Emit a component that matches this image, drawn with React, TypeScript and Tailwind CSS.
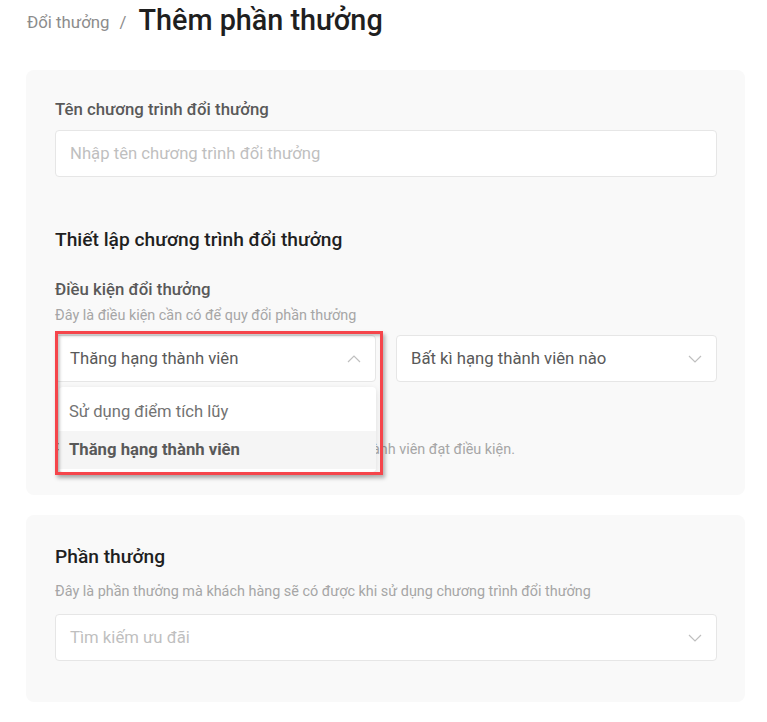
import React from "react";

function ChevronDown() {
  return (
    <svg width="14" height="8" viewBox="0 0 14 8" fill="none">
      <path d="M1 1l6 6 6-6" stroke="#bfbfbf" strokeWidth="1.2" />
    </svg>
  );
}

function ChevronUp() {
  return (
    <svg width="14" height="8" viewBox="0 0 14 8" fill="none">
      <path d="M1 7l6-6 6 6" stroke="#bfbfbf" strokeWidth="1.2" />
    </svg>
  );
}

export default function App() {
  return (
    <div className="min-h-[722px] bg-white font-['Roboto',sans-serif] pl-[26px] pr-[22px] pt-[3px] pb-[20px]">
      {/* Breadcrumb */}
      <div className="flex items-center h-[34px]">
        <span className="text-[16.8px] text-[#8c8c8c] pt-[6px] pl-[1px]">Đổi thưởng</span>
        <span className="text-[16.8px] text-[#8c8c8c] ml-[10px] mr-[12px] pt-[6px]">/</span>
        <h1 className="text-[28.8px] leading-[34px] text-[#1f1f1f] font-medium">Thêm phần thưởng</h1>
      </div>

      {/* Card 1 */}
      <div className="mt-[33px] bg-[#f9f9f9] rounded-[8px] pl-[29px] pr-[28px] pt-[28px] pb-[35px]">
        <div className="text-[16.8px] leading-[22px] text-[#595959] font-medium">Tên chương trình đổi thưởng</div>
        <div className="mt-[10px] h-[47px] bg-white border border-[#e6e6e6] rounded-[4px] flex items-center px-[14px]">
          <span className="text-[16.7px] text-[#bfbfbf]">Nhập tên chương trình đổi thưởng</span>
        </div>

        <div className="mt-[50px] text-[19.2px] leading-[26px] text-[#1f1f1f] font-medium">Thiết lập chương trình đổi thưởng</div>

        <div className="mt-[25px] text-[16.8px] leading-[22px] text-[#595959] font-medium">Điều kiện đổi thưởng</div>
        <div className="mt-[6px] text-[14.4px] leading-[20px] text-[#a6a6a6]">Đây là điều kiện cần có để quy đổi phần thưởng</div>

        <div className="relative mt-[9px] grid grid-cols-2 gap-[20px]">
          <div className="h-[47px] bg-white border border-[#e6e6e6] rounded-[4px] flex items-center justify-between pl-[14px] pr-[14px]">
            <span className="text-[16.7px] text-[#595959]">Thăng hạng thành viên</span>
            <ChevronUp />
          </div>
          <div className="h-[47px] bg-white border border-[#e6e6e6] rounded-[4px] flex items-center justify-between pl-[14px] pr-[14px]">
            <span className="text-[16.7px] text-[#595959]">Bất kì hạng thành viên nào</span>
            <ChevronDown />
          </div>

          {/* Dropdown menu */}
          <div className="absolute left-[4px] top-[52px] w-[317px] bg-white rounded-[4px] shadow-[0_2px_6px_rgba(0,0,0,0.12)] pt-[6px] pb-[3px] z-10">
            <div className="h-[38px] flex items-center px-[10px] text-[16.6px] text-[#737373]">Sử dụng điểm tích lũy</div>
            <div className="h-[38px] flex items-center px-[10px] text-[16.7px] text-[#595959] font-bold bg-[#f5f5f5]">Thăng hạng thành viên</div>
          </div>

          {/* Annotation box */}
          <div className="absolute left-0 top-[-4px] w-[328px] h-[144px] border-[3px] border-[#f5454b] shadow-[inset_2px_2px_3px_rgba(0,0,0,0.22),2px_3px_4px_rgba(0,0,0,0.3)] z-20 pointer-events-none" />
        </div>

        <div className="mt-[58px] text-[14.4px] leading-[20px] text-[#a6a6a6]">Phần thưởng được tự động gửi tới tất cả những thành viên đạt điều kiện.</div>
      </div>

      {/* Card 2 */}
      <div className="mt-[20px] bg-[#f9f9f9] rounded-[8px] pl-[29px] pr-[28px] pt-[29px] pb-[41px]">
        <div className="text-[19.2px] leading-[26px] text-[#1f1f1f] font-medium">Phần thưởng</div>
        <div className="mt-[12px] text-[14.4px] leading-[20px] text-[#a6a6a6]">Đây là phần thưởng mà khách hàng sẽ có được khi sử dụng chương trình đổi thưởng</div>
        <div className="mt-[12px] h-[47px] bg-white border border-[#e6e6e6] rounded-[4px] flex items-center justify-between px-[14px]">
          <span className="text-[16.7px] text-[#bfbfbf]">Tìm kiếm ưu đãi</span>
          <ChevronDown />
        </div>
      </div>
    </div>
  );
}
